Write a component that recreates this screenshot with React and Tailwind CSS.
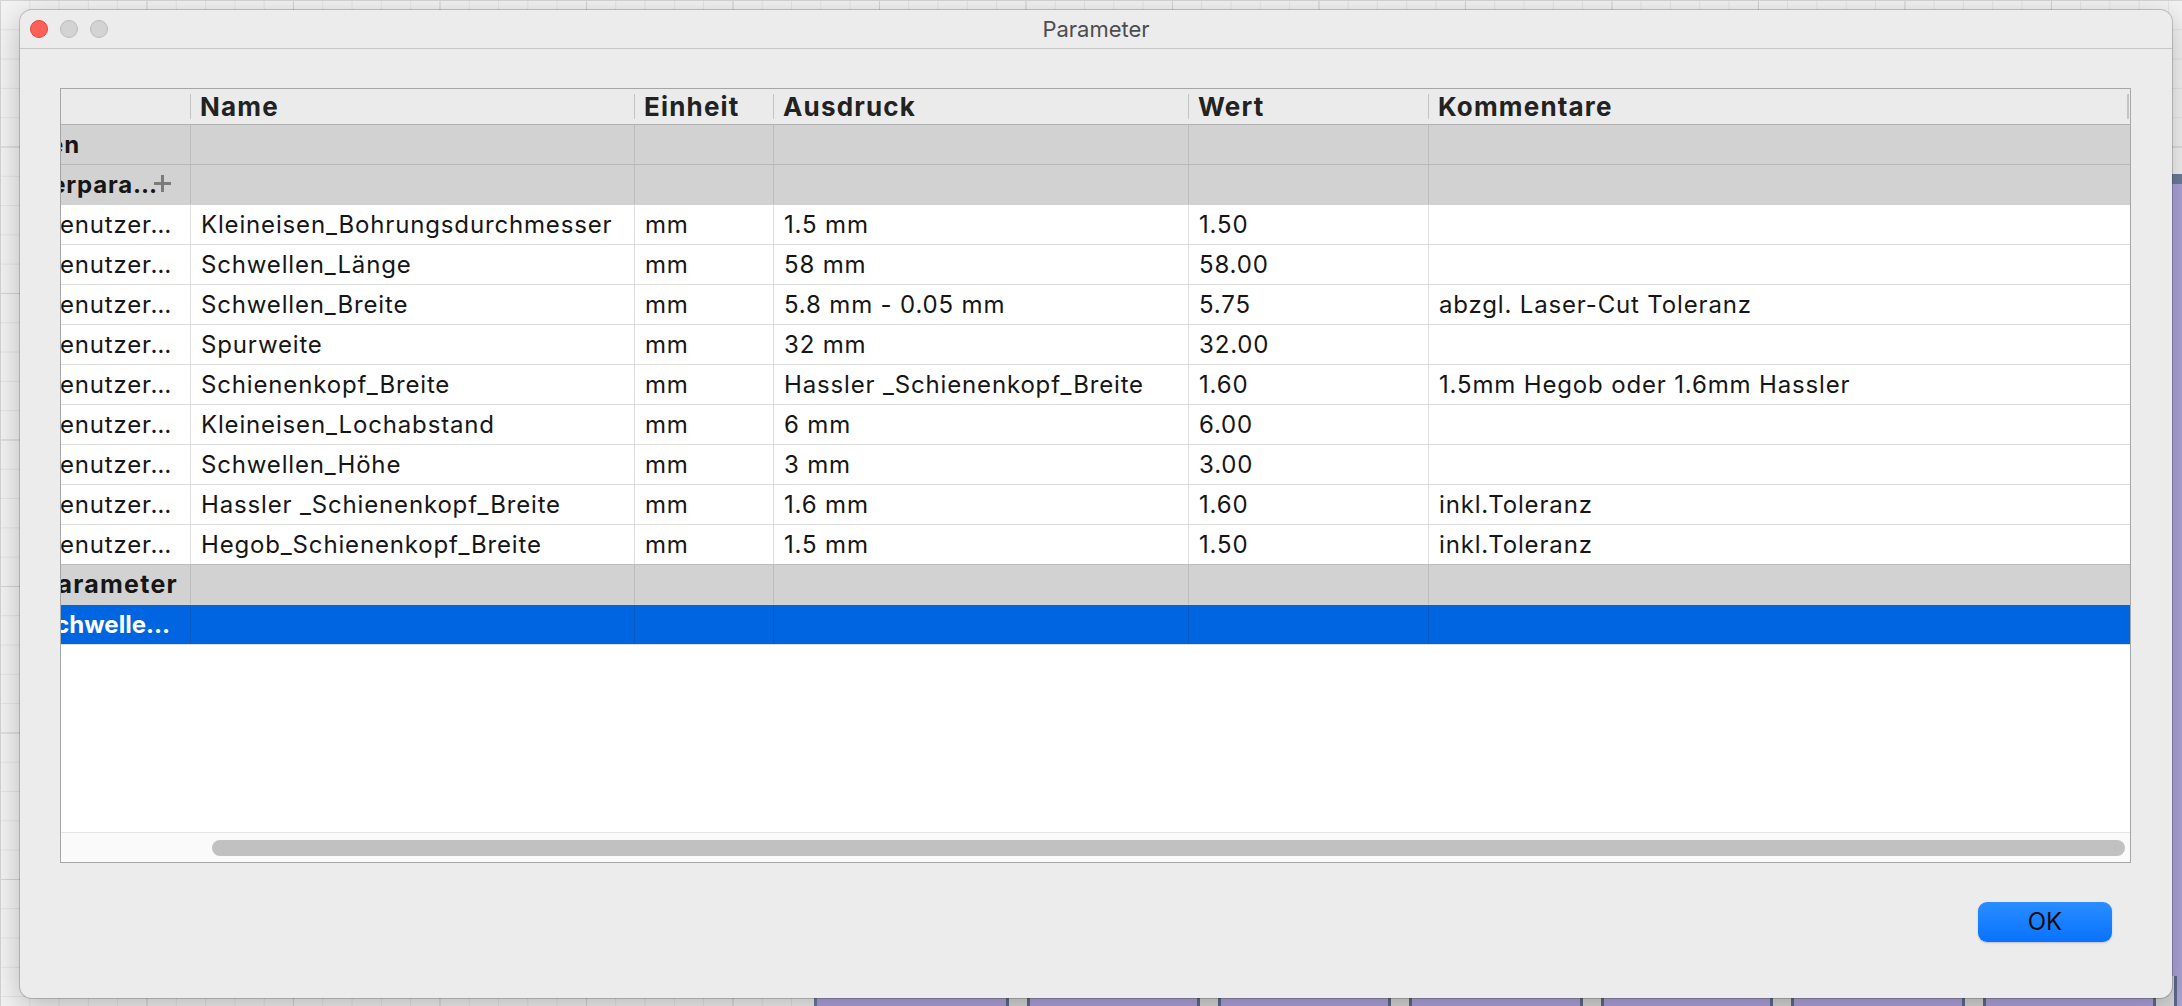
import React from "react"

const COLS = ["w-[129px]", "w-[444px]", "w-[139px]", "w-[415px]", "w-[240px]", "flex-1"]

const HEADERS = ["", "Name", "Einheit", "Ausdruck", "Wert", "Kommentare"]

const DATA = [
  ["Kleineisen_Bohrungsdurchmesser", "mm", "1.5 mm", "1.50", ""],
  ["Schwellen_Länge", "mm", "58 mm", "58.00", ""],
  ["Schwellen_Breite", "mm", "5.8 mm - 0.05 mm", "5.75", "abzgl. Laser-Cut Toleranz"],
  ["Spurweite", "mm", "32 mm", "32.00", ""],
  ["Schienenkopf_Breite", "mm", "Hassler _Schienenkopf_Breite", "1.60", "1.5mm Hegob oder 1.6mm Hassler"],
  ["Kleineisen_Lochabstand", "mm", "6 mm", "6.00", ""],
  ["Schwellen_Höhe", "mm", "3 mm", "3.00", ""],
  ["Hassler _Schienenkopf_Breite", "mm", "1.6 mm", "1.60", "inkl.Toleranz"],
  ["Hegob_Schienenkopf_Breite", "mm", "1.5 mm", "1.50", "inkl.Toleranz"],
]

// first column is scrolled out to the left, only the tail of the text shows
function FirstCell({ text, pr, cls = "", plus }) {
  return (
    <div className={`${COLS[0]} relative flex h-full shrink-0 items-center justify-end overflow-hidden ${pr}`}>
      <span className={`shrink-0 whitespace-nowrap ${cls}`}>{text}</span>
      {plus && (
        <svg className="absolute left-[91px] top-[8px]" width="21" height="21" viewBox="0 0 21 21">
          <path d="M10.5 2v17M2 10.5h17" stroke="#7b7b7b" strokeWidth="3" />
        </svg>
      )}
    </div>
  )
}

function GroupRow({ text, pr, cls, plus, line }) {
  return (
    <div className={`flex h-[40px] shrink-0 border-b bg-[#d2d2d2] ${line}`}>
      <FirstCell text={text} pr={pr} cls={cls} plus={plus} />
      {COLS.slice(1).map((w, i) => (
        <div key={i} className={`${w} h-full shrink-0 border-l border-[#bdbdbd]`} />
      ))}
    </div>
  )
}

function DataRow({ row }) {
  return (
    <div className="flex h-[40px] shrink-0 border-b border-[#dcdcdc] bg-white">
      <FirstCell text="Benutzer…" pr="pr-[18px]" />
      {row.map((v, i) => (
        <div key={i} className={`${COLS[i + 1]} flex h-full shrink-0 items-center overflow-hidden whitespace-nowrap border-l border-[#dedede] pl-[10px]`}>
          {v}
        </div>
      ))}
    </div>
  )
}

export default function App() {
  return (
    <div className="relative h-[1006px] w-[2182px] overflow-hidden bg-[#f3f3f3] bg-[linear-gradient(to_right,#d4d4d4_1px,transparent_1px),linear-gradient(to_bottom,#d4d4d4_1px,transparent_1px),linear-gradient(to_right,#e4e4e4_1px,transparent_1px),linear-gradient(to_bottom,#e4e4e4_1px,transparent_1px)] bg-[size:146.5px_146.5px,146.5px_146.5px,29.3px_29.3px,29.3px_29.3px] pl-[20px] pt-[10px] font-[Inter,sans-serif] text-[#161616]">
      {/* purple canvas behind the dialog */}
      <div className="absolute bottom-0 left-[814px] right-0 top-[174px] border-l-[3px] border-t-[10px] border-[#6e7c9c] bg-[#aea4da]">
        <div className="absolute bottom-0 left-[189px] h-[30px] w-[24px] border-x-[3px] border-[#5e6b8a] bg-[#d8d8d8]" />
        <div className="absolute bottom-0 left-[380px] h-[30px] w-[24px] border-x-[3px] border-[#5e6b8a] bg-[#d8d8d8]" />
        <div className="absolute bottom-0 left-[571px] h-[30px] w-[24px] border-x-[3px] border-[#5e6b8a] bg-[#d8d8d8]" />
        <div className="absolute bottom-0 left-[763px] h-[30px] w-[24px] border-x-[3px] border-[#5e6b8a] bg-[#d8d8d8]" />
        <div className="absolute bottom-0 left-[953px] h-[30px] w-[24px] border-x-[3px] border-[#5e6b8a] bg-[#d8d8d8]" />
        <div className="absolute bottom-0 left-[1145px] h-[30px] w-[24px] border-x-[3px] border-[#5e6b8a] bg-[#d8d8d8]" />
        <div className="absolute bottom-0 left-[1336px] h-[30px] w-[24px] border-x-[3px] border-[#5e6b8a] bg-[#d8d8d8]" />
      </div>

      {/* dialog window */}
      <div className="relative flex h-[988px] w-[2152px] flex-col rounded-[12px] bg-[#ececec] shadow-[0_0_0_1px_rgba(0,0,0,0.18),0_8px_30px_rgba(0,0,0,0.25)]">
        <div className="relative flex h-[39px] shrink-0 items-center gap-[12px] border-b border-[#c7c7c7] pl-[10px]">
          <div className="h-[18px] w-[18px] rounded-full border border-[#e1463f] bg-[#fe5f57]" />
          <div className="h-[18px] w-[18px] rounded-full border border-[#bcbcbc] bg-[#d3d3d3]" />
          <div className="h-[18px] w-[18px] rounded-full border border-[#bcbcbc] bg-[#d3d3d3]" />
          <div className="absolute inset-0 flex items-center justify-center text-[22px] text-[#4d4d4d]">Parameter</div>
        </div>

        <div className="flex flex-1 flex-col pl-[40px] pr-[41px] pt-[39px]">
          <div className="flex h-[775px] flex-col border border-[#a6a6a6] bg-white text-[24px] tracking-[0.035em]">
            {/* header */}
            <div className="flex h-[36px] shrink-0 border-b border-[#b1b1b1] bg-[#ebebeb] text-[26px] font-bold tracking-[0.045em] text-[#222]">
              {HEADERS.map((h, i) => (
                <div key={i} className={`${COLS[i]} flex h-full shrink-0 items-center`}>
                  {i > 0 && <div className="mr-[9px] h-[25px] w-px bg-[#c4c4c4]" />}
                  {h}
                  {i === 5 && <div className="ml-auto mr-px h-[25px] w-[2px] bg-[#c4c4c4]" />}
                </div>
              ))}
            </div>

            <GroupRow text="Konstanten" pr="pr-[110px]" cls="font-bold" line="border-[#b7b7b7]" />
            <GroupRow text="Benutzerpara…" pr="pr-[32px]" cls="font-bold" plus line="border-[#d2d2d2]" />
            {DATA.map((r, i) => (
              <DataRow key={i} row={r} />
            ))}
            <div className="-mt-px border-t border-[#bdbdbd]" />
            <GroupRow text="Modellparameter" pr="pr-[12px]" cls="text-[25px] font-bold tracking-[0.05em]" line="border-[#d2d2d2]" />

            <div className="flex h-[40px] shrink-0 border-b border-[#dcdcdc] bg-[#0065e1]">
              <FirstCell text="Schwelle…" pr="pr-[20px]" cls="font-bold tracking-normal text-white" />
              {COLS.slice(1).map((w, i) => (
                <div key={i} className={`${w} h-full shrink-0 border-l border-[#0b59c0]`} />
              ))}
            </div>

            <div className="flex-1" />

            {/* horizontal scrollbar */}
            <div className="flex h-[30px] shrink-0 items-center border-t border-[#e3e3e3] bg-[#fafafa] pl-[151px] pr-[5px]">
              <div className="h-[16px] flex-1 rounded-full bg-[#c1c1c1]" />
            </div>
          </div>

          <div className="mt-[39px] flex justify-end pr-[19px]">
            <button className="flex h-[40px] w-[134px] items-center justify-center rounded-[9px] bg-[linear-gradient(to_bottom,#2a8dff,#0872ff)] text-[24px] text-[#0b0b0b] shadow-[0_1px_2px_rgba(0,0,0,0.2)]">
              OK
            </button>
          </div>
        </div>
      </div>
    </div>
  )
}
